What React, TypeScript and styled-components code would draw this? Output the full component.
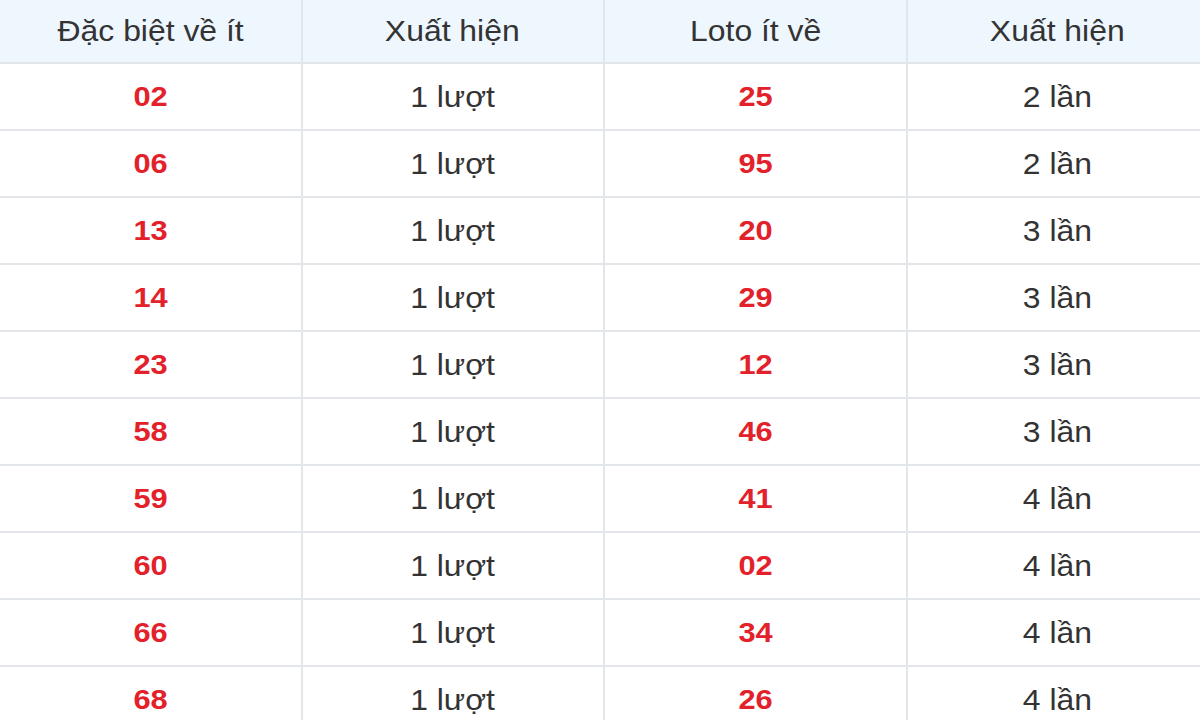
import React from "react";
import styled, { createGlobalStyle } from "styled-components";

const Global = createGlobalStyle`
  html, body { margin: 0; padding: 0; background: #fff; overflow: hidden; }
  body { font-family: "Liberation Sans", Arial, sans-serif; }
`;

const Table = styled.div`
  width: 1210px;
  display: grid;
  grid-template-columns: repeat(4, 1fr);
  grid-auto-rows: 67px;
  grid-template-rows: 64px;
`;

const HeadCell = styled.div`
  background: #eef6fe;
  border-right: 2px solid #e2e5e9;
  border-bottom: 2px solid #e2e5e9;
  display: flex;
  align-items: center;
  justify-content: center;
  font-size: 29px;
  color: #333;
  box-sizing: border-box;
`;

const Cell = styled.div<{ $num?: boolean }>`
  border-right: 2px solid #e2e5e9;
  border-bottom: 2px solid #e2e5e9;
  display: flex;
  align-items: center;
  justify-content: center;
  padding-top: 1px;
  font-size: ${(p) => (p.$num ? "28px" : "29px")};
  font-weight: ${(p) => (p.$num ? 700 : 400)};
  color: ${(p) => (p.$num ? "#e3212b" : "#333")};
  box-sizing: border-box;
`;

const Text = styled.span`
  display: inline-block;
  transform: scaleX(1.1);
`;

const rows: [string, string, string, string][] = [
  ["02", "1 lượt", "25", "2 lần"],
  ["06", "1 lượt", "95", "2 lần"],
  ["13", "1 lượt", "20", "3 lần"],
  ["14", "1 lượt", "29", "3 lần"],
  ["23", "1 lượt", "12", "3 lần"],
  ["58", "1 lượt", "46", "3 lần"],
  ["59", "1 lượt", "41", "4 lần"],
  ["60", "1 lượt", "02", "4 lần"],
  ["66", "1 lượt", "34", "4 lần"],
  ["68", "1 lượt", "26", "4 lần"],
];

export default function App() {
  return (
    <>
      <Global />
      <Table>
        <HeadCell><Text>Đặc biệt về ít</Text></HeadCell>
        <HeadCell><Text>Xuất hiện</Text></HeadCell>
        <HeadCell><Text>Loto ít về</Text></HeadCell>
        <HeadCell><Text>Xuất hiện</Text></HeadCell>
        {rows.map((r, i) => (
          <React.Fragment key={i}>
            <Cell $num><Text>{r[0]}</Text></Cell>
            <Cell><Text>{r[1]}</Text></Cell>
            <Cell $num><Text>{r[2]}</Text></Cell>
            <Cell><Text>{r[3]}</Text></Cell>
          </React.Fragment>
        ))}
      </Table>
    </>
  );
}
